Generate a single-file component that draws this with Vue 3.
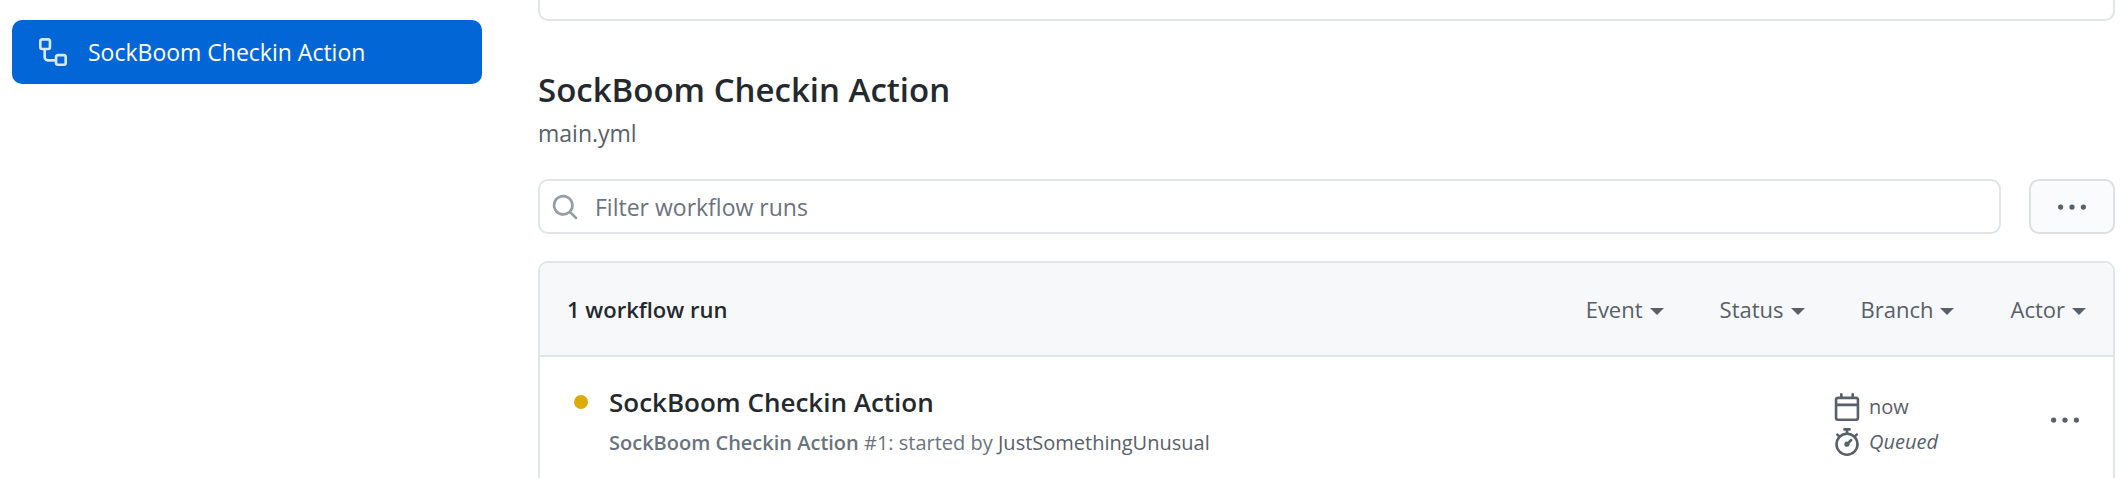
<script setup>
import { ref } from 'vue'

const query = ref('')
const filters = ['Event', 'Status', 'Branch', 'Actor']
</script>

<template>
  <div class="page">
    <nav class="sidebar" aria-label="Workflows">
      <a class="workflow" href="#" aria-current="page">
        <svg class="icon" viewBox="0 0 16 16" aria-hidden="true">
          <path fill-rule="evenodd" d="M0 1.75C0 .784.784 0 1.75 0h3.5C6.216 0 7 .784 7 1.75v3.5A1.75 1.75 0 015.25 7H4v4a1 1 0 001 1h4v-1.25C9 9.784 9.784 9 10.75 9h3.5c.966 0 1.75.784 1.75 1.75v3.5A1.75 1.75 0 0114.250 16h-3.500A1.750 1.750 0 019 14.250v-.750H5A2.500 2.500 0 012.500 11V7h-.750A1.750 1.750 0 010 5.250v-3.500zm1.750-.250a.250.250 0 00-.250.250v3.500c0 .138.112.250.250.250h3.500a.250.250 0 00.250-.250v-3.500a.250.250 0 00-.250-.250h-3.500zm9 9a.250.250 0 00-.250.250v3.500c0 .138.112.250.250.250h3.500a.250.250 0 00.250-.250v-3.500a.250.250 0 00-.250-.250h-3.500z" />
        </svg>
        <span>SockBoom Checkin Action</span>
      </a>
    </nav>

    <main class="content">
      <div class="notice"></div>

      <header class="heading">
        <h1>SockBoom Checkin Action</h1>
        <a class="file" href="#">main.yml</a>
      </header>

      <div class="toolbar">
        <label class="search">
          <svg class="icon" viewBox="0 0 16 16" aria-hidden="true">
            <path fill-rule="evenodd" d="M11.500 7a4.499 4.499 0 11-8.998 0A4.499 4.499 0 0111.500 7zm-.820 4.740a6 6 0 111.060-1.060l3.040 3.040a.750.750 0 11-1.060 1.060l-3.040-3.040z" />
          </svg>
          <input v-model="query" type="text" placeholder="Filter workflow runs" aria-label="Filter workflow runs" />
        </label>
        <button class="more" type="button" aria-label="Workflow options">
          <svg class="icon" viewBox="0 0 16 16" aria-hidden="true">
            <circle cx="1.500" cy="8" r="1.500" /><circle cx="8" cy="8" r="1.500" /><circle cx="14.500" cy="8" r="1.500" />
          </svg>
        </button>
      </div>

      <section class="runs">
        <div class="runs-head">
          <strong>1 workflow run</strong>
          <div class="filters">
            <button v-for="name in filters" :key="name" type="button">
              {{ name }}<i class="caret"></i>
            </button>
          </div>
        </div>
        <article class="run">
          <span class="dot"></span>
          <div class="summary">
            <a class="run-title" href="#">SockBoom Checkin Action</a>
            <p><b>SockBoom Checkin Action</b> #1: started by <a href="#">JustSomethingUnusual</a></p>
          </div>
          <div class="meta">
            <span>
              <svg class="icon" viewBox="0 0 16 16" aria-hidden="true">
                <path fill-rule="evenodd" d="M4.750 0a.750.750 0 01.750.750V2h5V.750a.750.750 0 011.500 0V2h1.250c.966 0 1.750.784 1.750 1.750v10.500A1.750 1.750 0 0113.250 16H2.750A1.750 1.750 0 011 14.250V3.750C1 2.784 1.784 2 2.750 2H4V.750A.750.750 0 014.750 0zm0 3.500h8.500a.250.250 0 01.250.250V6h-11V3.750a.250.250 0 01.250-.250h2zm-2.250 4v6.750c0 .138.112.250.250.250h10.500a.250.250 0 00.250-.250V7.500h-11z" />
              </svg>
              now
            </span>
            <span>
              <svg class="icon" viewBox="0 0 16 16" aria-hidden="true">
                <path fill-rule="evenodd" d="M5.750.750A.750.750 0 016.500 0h3a.750.750 0 010 1.500h-.750v1l-.001.041a6.718 6.718 0 013.464 1.435l.007-.006.750-.750a.750.750 0 111.060 1.060l-.750.750-.006.007a6.750 6.750 0 11-10.548 0L2.720 5.030l-.750-.750a.750.750 0 011.060-1.060l.750.750.007.006A6.718 6.718 0 017.250 2.541a.756.756 0 010-.041v-1H6.500a.750.750 0 01-.750-.750zM8 14.500A5.250 5.250 0 108 4a5.250 5.250 0 000 10.500zm.389-6.700l1.330-1.330a.750.750 0 111.061 1.060L9.450 8.861A1.502 1.502 0 018 10.750a1.500 1.500 0 11.389-2.950z" />
              </svg>
              <em>Queued</em>
            </span>
          </div>
          <button class="run-more" type="button" aria-label="Run options">
            <svg class="icon" viewBox="0 0 16 16" aria-hidden="true">
              <circle cx="1.500" cy="8" r="1.500" /><circle cx="8" cy="8" r="1.500" /><circle cx="14.500" cy="8" r="1.500" />
            </svg>
          </button>
        </article>
      </section>
    </main>
  </div>
</template>

<style>
body {
  background: #fff;
}
</style>

<style scoped>
.page {
  display: grid;
  grid-template-columns: 470px minmax(0, 1fr);
  gap: 56px;
  padding: 0 5px 0 12px;
  height: 100vh;
  overflow: hidden;
  font: 23px/36px "Open Sans", "Noto Sans", sans-serif;
  color: #24292e;
}
.page * {
  box-sizing: border-box;
}
a {
  color: inherit;
  text-decoration: none;
}
button {
  display: flex;
  align-items: center;
  padding: 0;
  border: 0;
  background: none;
  font: inherit;
  color: #586069;
}
.icon {
  width: 28px;
  height: 28px;
  flex: none;
  fill: currentColor;
}
.sidebar {
  padding-top: 20px;
}
.workflow {
  display: flex;
  align-items: center;
  gap: 21px;
  height: 64px;
  padding: 0 27px;
  border-radius: 10px;
  background: #0366d6;
  color: #fff;
}
.workflow .icon {
  opacity: 0.85;
}
.content {
  display: flex;
  flex-direction: column;
}
.notice {
  flex: none;
  height: 21px;
  border: 2px solid #e1e4e8;
  border-top: 0;
  border-radius: 0 0 10px 10px;
}
.heading {
  padding: 44px 0 28px;
}
h1 {
  margin: 0;
  font-size: 33px;
  font-weight: 600;
  line-height: 50px;
}
.file {
  display: block;
  color: #586069;
}
.toolbar {
  display: flex;
  gap: 28px;
  margin-bottom: 27px;
}
.search {
  display: flex;
  flex: 1;
  align-items: center;
  gap: 16px;
  height: 55px;
  padding: 0 11px;
  border: 2px solid #e1e4e8;
  border-radius: 10px;
  color: #959da5;
}
.search input {
  flex: 1;
  min-width: 0;
  padding: 0;
  border: 0;
  outline: 0;
  background: none;
  font: inherit;
  color: #24292e;
}
.search input::placeholder {
  color: #6a737d;
  opacity: 1;
}
.more {
  justify-content: center;
  width: 86px;
  height: 55px;
  border: 2px solid #dddfe1;
  border-radius: 10px;
  background: #fafbfc;
}
.runs {
  flex: 1;
  border: 2px solid #e1e4e8;
  border-bottom: 0;
  border-radius: 10px 10px 0 0;
}
.runs-head {
  display: flex;
  align-items: center;
  justify-content: space-between;
  height: 94px;
  padding: 0 27px;
  border-bottom: 2px solid #e1e4e8;
  border-radius: 8px 8px 0 0;
  background: #f6f8fa;
  font-size: 22px;
}
strong,
b {
  font-weight: 600;
}
.filters {
  display: flex;
  gap: 56px;
}
.caret {
  margin: 4px 0 0 7px;
  border: 7px solid transparent;
  border-top-color: currentColor;
  border-bottom: 0;
}
.run {
  display: flex;
  padding: 25px 34px 0;
}
.dot {
  width: 14px;
  height: 14px;
  margin: 13px 21px 0 0;
  border-radius: 50%;
  background: #dbab09;
}
.summary {
  flex: 1;
}
.run-title {
  display: block;
  font-size: 26px;
  font-weight: 600;
  line-height: 40px;
}
p {
  margin: 3px 0 0;
  font-size: 20px;
  color: #6a737d;
}
p a {
  color: #586069;
}
.meta {
  width: 218px;
  padding-top: 7px;
  font-size: 20px;
  color: #586069;
}
.meta span {
  display: flex;
  align-items: center;
  gap: 8px;
  height: 35px;
}
.run-more {
  height: 28px;
  margin-top: 24px;
}
</style>
